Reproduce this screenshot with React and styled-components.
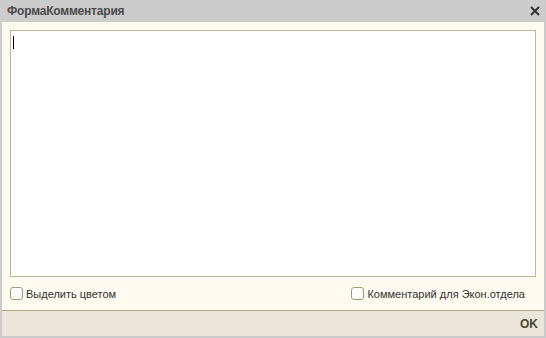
import React from 'react'
import styled, { createGlobalStyle } from 'styled-components'

const Global = createGlobalStyle`
  html, body {
    margin: 0;
    padding: 0;
    background: #cccccc;
  }
  body {
    font-family: "Liberation Sans", Arial, sans-serif;
  }
`

const Window = styled.div`
  width: 546px;
  height: 338px;
  background: #cccccc;
  display: flex;
  flex-direction: column;
  padding: 0 2px 3px 2px;
  box-sizing: border-box;
`

const TitleBar = styled.div`
  height: 22px;
  display: flex;
  align-items: center;
  justify-content: space-between;
  padding: 0 3px 0 5px;
  flex-shrink: 0;
`

const Title = styled.div`
  font-size: 12px;
  font-weight: bold;
  color: #4a4a4a;
  letter-spacing: -0.2px;
`

const CloseButton = styled.div`
  width: 12px;
  height: 12px;
  display: flex;
  align-items: center;
  justify-content: center;
`

const Body = styled.div`
  flex: 1;
  background: #fefaef;
  display: flex;
  flex-direction: column;
  padding: 8px 8px 0 8px;
`

const TextArea = styled.div`
  height: 247px;
  box-sizing: border-box;
  border: 1px solid #bdb697;
  background: #ffffff;
  padding: 5px 0 0 2px;
`

const Caret = styled.div`
  width: 1px;
  height: 13px;
  background: #000;
`

const OptionsRow = styled.div`
  display: flex;
  justify-content: space-between;
  align-items: center;
  height: 33px;
`

const Option = styled.label`
  display: flex;
  align-items: center;
  gap: 3px;
  font-size: 11px;
  color: #333;
  margin-right: ${p => p.$right || 0}px;
`

const Box = styled.span`
  width: 11px;
  height: 11px;
  border: 1px solid #9e9b7f;
  border-radius: 3px;
  background: #fffefa;
  display: inline-block;
`

const Footer = styled.div`
  height: 25px;
  flex-shrink: 0;
  border-top: 1px solid #b3ab85;
  background: #ebe6d9;
  display: flex;
  align-items: center;
  justify-content: flex-end;
  padding-right: 6px;
`

const OkButton = styled.div`
  font-size: 12px;
  font-weight: bold;
  color: #4a4630;
`

export default function App() {
  return (
    <>
      <Global />
      <Window>
        <TitleBar>
          <Title>ФормаКомментария</Title>
          <CloseButton>
            <svg width="10" height="10" viewBox="0 0 10 10">
              <path d="M1 1L9 9M9 1L1 9" stroke="#333" strokeWidth="2" />
            </svg>
          </CloseButton>
        </TitleBar>
        <Body>
          <TextArea>
            <Caret />
          </TextArea>
          <OptionsRow>
            <Option>
              <Box />
              Выделить цветом
            </Option>
            <Option $right={11}>
              <Box />
              Комментарий для Экон.отдела
            </Option>
          </OptionsRow>
        </Body>
        <Footer>
          <OkButton>OK</OkButton>
        </Footer>
      </Window>
    </>
  )
}
